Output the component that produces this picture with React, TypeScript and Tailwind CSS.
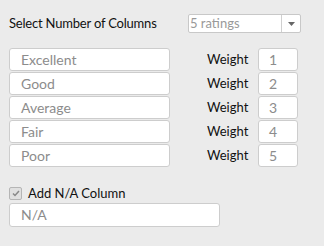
import React from 'react'

const ratings = ['Excellent', 'Good', 'Average', 'Fair', 'Poor']

const App = () => {
    return (
        <div className="w-[324px] h-[246px] bg-[#ebebeb] font-['Lato',sans-serif] text-[13px] text-[#111]">
            <div className="flex items-center pt-[14px] pl-[9px]">
                <span className="w-[179px] leading-[19px] text-[13px] tracking-[-0.2px]">Select Number of Columns</span>
                <div className="flex h-[19px] w-[113px] bg-white border border-[#c8c8c8] rounded-[2px]">
                    <span className="flex-1 pl-[1px] text-[13px] leading-[17px] text-[#999]">5 ratings</span>
                    <div className="w-[19px] border-l border-[#d0d0d0] flex items-center justify-center">
                        <svg width="7" height="4" viewBox="0 0 7 4">
                            <path d="M0 0h7L3.5 4z" fill="#666" />
                        </svg>
                    </div>
                </div>
            </div>
            <div className="flex flex-col gap-[1px] pt-[15px] pl-[9px]">
                {ratings.map((r, i) => (
                    <div key={r} className="flex items-center h-[23px]">
                        <div className="w-[161px] h-[23px] bg-white border border-[#cdcdcd] rounded-[3px] pl-[11px] leading-[21px] text-[14px] text-[#8c8c8c]">
                            {r}
                        </div>
                        <span className="ml-[37px] w-[51px] leading-[23px]">Weight</span>
                        <div className="w-[40px] h-[23px] bg-white border border-[#cdcdcd] rounded-[3px] pl-[10px] leading-[21px] text-[14px] text-[#8c8c8c]">
                            {i + 1}
                        </div>
                    </div>
                ))}
            </div>
            <div className="flex items-center gap-[6px] pt-[20px] pl-[9px]">
                <div className="w-[13px] h-[13px] bg-[#e0e0e0] border border-[#b5b5b5] rounded-[2px] flex items-center justify-center">
                    <svg width="8" height="7" viewBox="0 0 8 7">
                        <path d="M1 3.5l2 2L7 1" stroke="#888" strokeWidth="1.5" fill="none" />
                    </svg>
                </div>
                <span className="leading-[13px]">Add N/A Column</span>
            </div>
            <div className="pt-[3px] pl-[9px]">
                <div className="w-[211px] h-[24px] bg-white border border-[#cdcdcd] rounded-[3px] pl-[11px] leading-[22px] text-[14px] text-[#8c8c8c]">
                    N/A
                </div>
            </div>
        </div>
    )
}

export default App
